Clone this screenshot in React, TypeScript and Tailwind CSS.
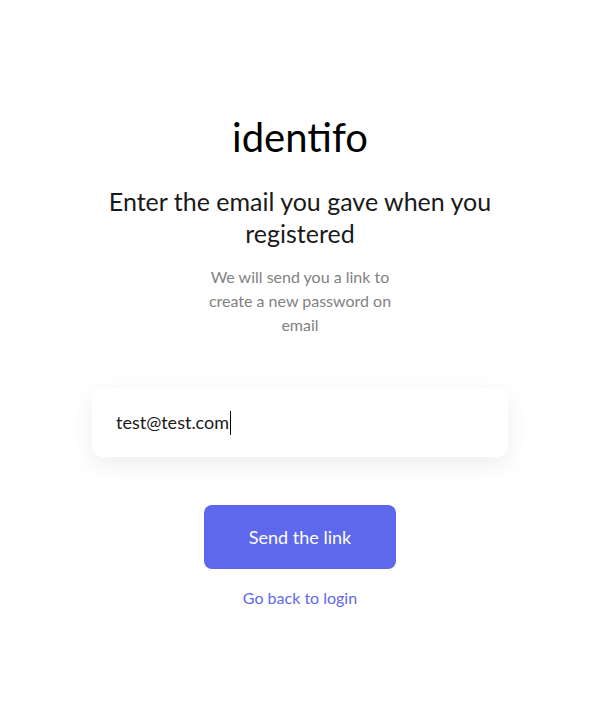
import React from "react";

export default function App() {
  return (
    <div className="min-h-[720px] w-full bg-white font-['Lato','Open_Sans',sans-serif] flex justify-center">
      <div className="w-[416px] flex flex-col items-center pt-[111px]">
        <h1 className="text-[40px] leading-[52px] text-black">identifo</h1>

        <h2 className="mt-[22px] w-[400px] text-center text-[25px] leading-[32px] text-[#1a1a1a]">
          Enter the email you gave when you registered
        </h2>

        <p className="mt-[16px] w-[200px] text-center text-[16px] leading-[24px] text-[#828282]">
          We will send you a link to create a new password on email
        </p>

        <div className="mt-[51px] w-full h-[69px] rounded-[10px] bg-white shadow-[0_8px_24px_rgba(0,0,0,0.07)] flex items-center px-[24px]">
          <span className="text-[18px] text-[#1a1a1a]">test@test.com</span>
          <span className="ml-[1px] h-[24px] w-[1px] bg-black" />
        </div>

        <button className="mt-[48px] w-[192px] h-[64px] rounded-[8px] bg-[#5e68ec] text-white text-[18px]">
          Send the link
        </button>

        <a className="mt-[17px] text-[16px] text-[#5e68ec]">Go back to login</a>
      </div>
    </div>
  );
}
